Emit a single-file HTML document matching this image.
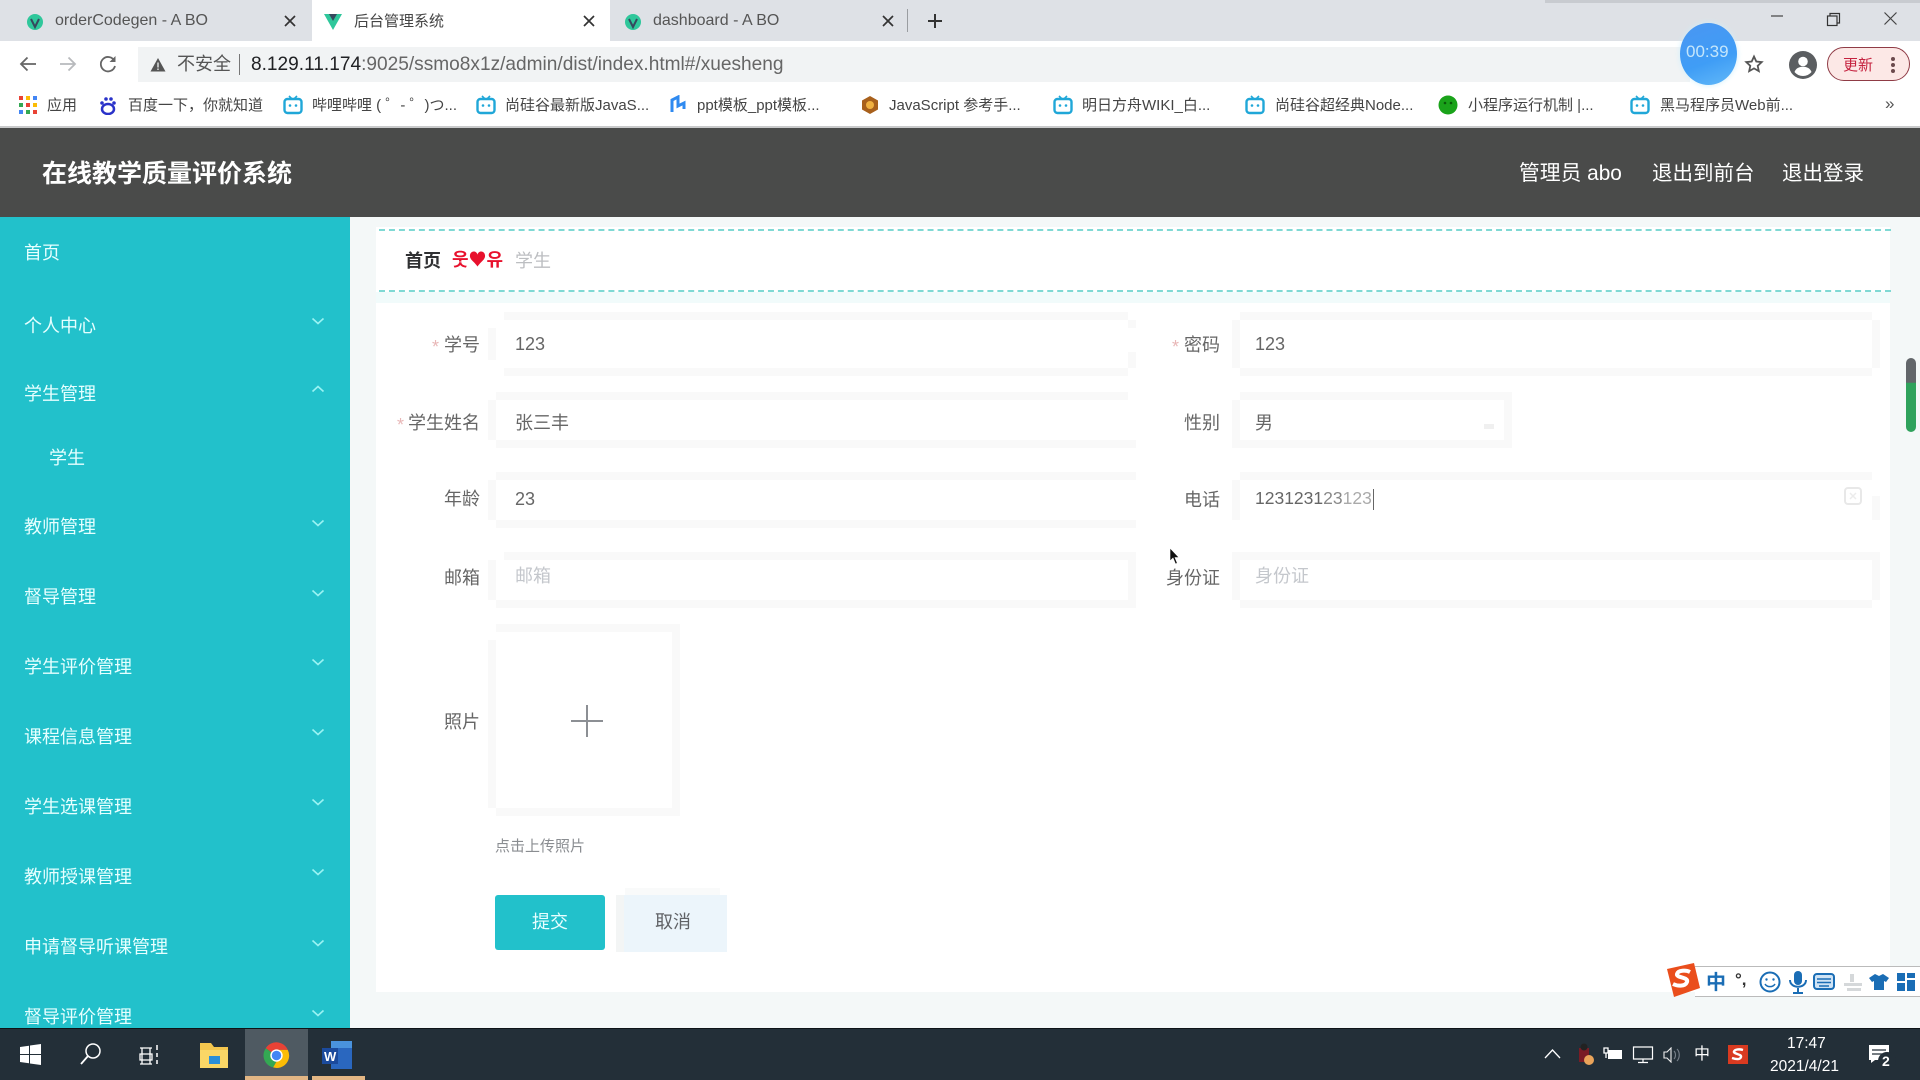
<!DOCTYPE html>
<html lang="zh"><head><meta charset="utf-8"><title>后台管理系统</title>
<style>
html,body{margin:0;padding:0}
body{width:1920px;height:1080px;overflow:hidden;position:relative;background:#f4f8f8;font-family:"Liberation Sans","Noto Sans CJK SC",sans-serif;color:#555}
div,svg,span.t{position:absolute}
.t{position:absolute;white-space:nowrap;line-height:1}
.bm{font-size:15px;color:#444;top:98px}
.m{font-size:18px;color:#e6ffff;left:24px}
.lb{font-size:18px;color:#666;text-align:right;width:120px}
.v{font-size:18px;color:#666}
.ph{font-size:18px;color:#c4c7cc}
.st{font-size:18px;color:#e8b7b7}
.o{background:#f9f9f9}
</style></head><body>
<svg width="0" height="0" style="left:0;top:0"><defs>
<symbol id="bili" viewBox="0 0 20 20"><path d="M6 1l3 3M14 1l-3 3" stroke="#20a7d8" stroke-width="1.6" fill="none"/><rect x="1.5" y="4" width="17" height="14" rx="3" fill="none" stroke="#20a7d8" stroke-width="2.4"/><circle cx="7" cy="10.5" r="1.3" fill="#20a7d8"/><circle cx="13" cy="10.5" r="1.3" fill="#20a7d8"/></symbol>
<symbol id="vue" viewBox="0 0 20 20"><path d="M1 3h18L10 19z" fill="#2fc79b"/><path d="M6 3h8l-4 7z" fill="#35495e"/></symbol>
<symbol id="chev" viewBox="0 0 14 8"><path d="M1.5 1.500L7 6.500l5.500-5" fill="none" stroke="#9af3f3" stroke-width="1.600"/></symbol>
</defs></svg>

<!-- tab strip -->
<div style="left:0;top:0;width:1920px;height:41px;background:#dee1e6"></div>
<div style="left:1545px;top:0;width:375px;height:3px;background:#c8cbd0"></div>
<div style="left:312px;top:0;width:298px;height:41px;background:#fff"></div>
<svg style="left:26px;top:13px" width="18" height="18"><circle cx="9" cy="9" r="8" fill="#2fc79b"/><path d="M5 6l4 8 4-8" fill="none" stroke="#35495e" stroke-width="2"/></svg>
<svg style="left:323px;top:11px" width="20" height="20"><use href="#vue"/></svg>
<svg style="left:624px;top:13px" width="18" height="18"><circle cx="9" cy="9" r="8" fill="#2fc79b"/><path d="M5 6l4 8 4-8" fill="none" stroke="#35495e" stroke-width="2"/></svg>
<span class="t" style="left:55px;top:13px;font-size:16px;color:#555">orderCodegen - A BO</span>
<span class="t" style="left:354px;top:14px;font-size:15px;color:#444">后台管理系统</span>
<span class="t" style="left:653px;top:13px;font-size:16px;color:#555">dashboard - A BO</span>
<svg style="left:284px;top:15px" width="12" height="12"><path d="M1 1l10 10M11 1L1 11" stroke="#333" stroke-width="1.700"/></svg>
<svg style="left:583px;top:15px" width="12" height="12"><path d="M1 1l10 10M11 1L1 11" stroke="#333" stroke-width="1.700"/></svg>
<svg style="left:882px;top:15px" width="12" height="12"><path d="M1 1l10 10M11 1L1 11" stroke="#333" stroke-width="1.700"/></svg>
<div style="left:907px;top:9px;width:1px;height:23px;background:#9a9da1"></div>
<svg style="left:927px;top:13px" width="16" height="16"><path d="M8 1v14M1 8h14" stroke="#333" stroke-width="2"/></svg>
<!-- window controls -->
<svg style="left:1770px;top:12px" width="14" height="8"><path d="M1 4h12" stroke="#444" stroke-width="1.200"/></svg>
<svg style="left:1826px;top:12px" width="15" height="15"><path d="M4 4V1.500h9.500V11H11" fill="none" stroke="#333" stroke-width="1.200"/><rect x="1.500" y="4" width="9.500" height="9.500" fill="none" stroke="#333" stroke-width="1.200"/></svg>
<svg style="left:1883px;top:11px" width="15" height="15"><path d="M1.500 1.500l12 12M13.500 1.500l-12 12" stroke="#444" stroke-width="1.200"/></svg>

<!-- toolbar -->
<div style="left:0;top:41px;width:1920px;height:86px;background:#fff"></div>
<div style="left:138px;top:47px;width:1552px;height:35px;background:#f1f3f4"></div>
<svg style="left:18px;top:55px" width="20" height="18"><path d="M18 9H3M9.500 2.500L3 9l6.500 6.500" fill="none" stroke="#666" stroke-width="1.800"/></svg>
<svg style="left:58px;top:55px" width="20" height="18"><path d="M2 9h15M10.500 2.500L17 9l-6.500 6.500" fill="none" stroke="#b8babd" stroke-width="1.800"/></svg>
<svg style="left:98px;top:54px" width="20" height="20"><path d="M16.500 7A7.200 7.200 0 1 0 17 12" fill="none" stroke="#666" stroke-width="1.800"/><path d="M17.500 2v6h-6z" fill="#666"/></svg>
<svg style="left:150px;top:57px" width="16" height="15"><path d="M8 1l7.500 13.500H.5z" fill="#555"/><path d="M8 5.500v5M8 11.500v1.500" stroke="#f1f3f4" stroke-width="1.300"/></svg>
<span class="t" style="left:177px;top:55px;font-size:18px;color:#555">不安全</span>
<div style="left:239px;top:54px;width:1px;height:21px;background:#777"></div>
<span class="t" style="left:251px;top:55px;font-size:19.100px;color:#202124">8.129.11.174<span style="color:#666">:9025/ssmo8x1z/admin/dist/index.html#/xuesheng</span></span>
<!-- timer -->
<div style="left:1680px;top:23px;width:57px;height:62px;border-radius:50%;background:linear-gradient(160deg,#4a96f2,#3f9df6 60%,#62b9f8);box-shadow:0 0 6px #cfeffb"></div>
<span class="t" style="left:1686px;top:43px;font-size:17px;color:#c4e6fb">00:39</span>
<svg style="left:1743px;top:53px" width="22" height="22"><path d="M11 3.500l2.300 5 5.400.6-4 3.700 1.100 5.300-4.800-2.700-4.800 2.700 1.100-5.300-4-3.700 5.400-.6z" fill="none" stroke="#555" stroke-width="1.800"/></svg>
<svg style="left:1789px;top:51px" width="28" height="28"><circle cx="14" cy="14" r="14" fill="#5b5e61"/><circle cx="14" cy="10.500" r="4.800" fill="#fff"/><path d="M5.500 21c1.500-4 5-5.200 8.500-5.200s7 1.200 8.500 5.200a11 11 0 0 1-17 0z" fill="#fff"/></svg>
<div style="left:1827px;top:47px;width:81px;height:32px;border:1.500px solid #8f3b45;border-radius:18px;background:#fce8e6"></div>
<span class="t" style="left:1843px;top:58px;font-size:15px;color:#c5223f">更新</span>
<div style="left:1891px;top:57px;width:4px;height:4px;border-radius:50%;background:#6b4a4d"></div>
<div style="left:1891px;top:63px;width:4px;height:4px;border-radius:50%;background:#6b4a4d"></div>
<div style="left:1891px;top:69px;width:4px;height:4px;border-radius:50%;background:#6b4a4d"></div>

<!-- bookmarks -->
<svg style="left:19px;top:96px" width="18" height="18"><rect width="4" height="4" fill="#e94235"/><rect x="7" width="4" height="4" fill="#fbbc05"/><rect x="14" width="4" height="4" fill="#4285f4"/><rect y="7" width="4" height="4" fill="#34a853"/><rect x="7" y="7" width="4" height="4" fill="#e94235"/><rect x="14" y="7" width="4" height="4" fill="#fbbc05"/><rect y="14" width="4" height="4" fill="#4285f4"/><rect x="7" y="14" width="4" height="4" fill="#34a853"/><rect x="14" y="14" width="4" height="4" fill="#e94235"/></svg>
<span class="t bm" style="left:47px">应用</span>
<svg style="left:99px;top:96px" width="17" height="19"><circle cx="3" cy="7" r="1.800" fill="#2a32c9"/><circle cx="7" cy="3" r="1.800" fill="#2a32c9"/><circle cx="12" cy="3" r="1.800" fill="#2a32c9"/><circle cx="15" cy="7" r="1.800" fill="#2a32c9"/><ellipse cx="9" cy="13" rx="6" ry="5" fill="none" stroke="#2a32c9" stroke-width="2.500"/></svg>
<span class="t bm" style="left:128px">百度一下，你就知道</span>
<svg style="left:283px;top:95px" width="20" height="20"><use href="#bili"/></svg>
<span class="t bm" style="left:312px">哔哩哔哩 ( ゜- ゜)つ...</span>
<svg style="left:476px;top:95px" width="20" height="20"><use href="#bili"/></svg>
<span class="t bm" style="left:505px">尚硅谷最新版JavaS...</span>
<svg style="left:669px;top:95px" width="19" height="20"><path d="M3 17V5l6-3v9l6-3v6" fill="none" stroke="#2f8af0" stroke-width="3"/></svg>
<span class="t bm" style="left:697px">ppt模板_ppt模板...</span>
<svg style="left:860px;top:95px" width="20" height="20"><path d="M10 1l8 4.500v9L10 19l-8-4.500v-9z" fill="#a8601c"/><circle cx="10" cy="10" r="4" fill="#f0b040"/></svg>
<span class="t bm" style="left:889px">JavaScript 参考手...</span>
<svg style="left:1053px;top:95px" width="20" height="20"><use href="#bili"/></svg>
<span class="t bm" style="left:1082px">明日方舟WIKI_白...</span>
<svg style="left:1245px;top:95px" width="20" height="20"><use href="#bili"/></svg>
<span class="t bm" style="left:1275px">尚硅谷超经典Node...</span>
<svg style="left:1438px;top:95px" width="20" height="20"><circle cx="10" cy="10" r="9.500" fill="#1aa31a"/><circle cx="7" cy="8" r="1.300" fill="#0a5a0a"/><circle cx="13" cy="8" r="1.300" fill="#0a5a0a"/></svg>
<span class="t bm" style="left:1468px">小程序运行机制 |...</span>
<svg style="left:1630px;top:95px" width="20" height="20"><use href="#bili"/></svg>
<span class="t bm" style="left:1660px">黑马程序员Web前...</span>
<span class="t" style="left:1885px;top:95px;font-size:17px;color:#555">»</span>
<div style="left:0;top:126px;width:1920px;height:2px;background:#c9cacb"></div>

<!-- app header -->
<div style="left:0;top:128px;width:1920px;height:89px;background:#4a4b4a"></div>
<span class="t" style="left:42px;top:162px;font-size:25px;font-weight:bold;color:#fff">在线教学质量评价系统</span>
<span class="t" style="left:1519px;top:164px;font-size:20.800px;color:#fff">管理员 abo</span>
<span class="t" style="left:1652px;top:164px;font-size:20.500px;color:#fff">退出到前台</span>
<span class="t" style="left:1782px;top:164px;font-size:20.500px;color:#fff">退出登录</span>

<!-- sidebar -->
<div style="left:0;top:217px;width:350px;height:812px;background:#22c1cb"></div>
<span class="t m" style="top:244px">首页</span>
<span class="t m" style="top:317px">个人中心</span>
<span class="t m" style="top:385px">学生管理</span>
<span class="t m" style="left:49px;top:449px">学生</span>
<span class="t m" style="top:518px">教师管理</span>
<span class="t m" style="top:588px">督导管理</span>
<span class="t m" style="top:658px">学生评价管理</span>
<span class="t m" style="top:728px">课程信息管理</span>
<span class="t m" style="top:798px">学生选课管理</span>
<span class="t m" style="top:868px">教师授课管理</span>
<span class="t m" style="top:938px">申请督导听课管理</span>
<span class="t m" style="top:1008px">督导评价管理</span>
<svg style="left:311px;top:317px" width="14" height="8"><use href="#chev"/></svg>
<svg style="left:311px;top:385px;transform:scaleY(-1)" width="14" height="8"><use href="#chev"/></svg>
<svg style="left:311px;top:519px" width="14" height="8"><use href="#chev"/></svg>
<svg style="left:311px;top:589px" width="14" height="8"><use href="#chev"/></svg>
<svg style="left:311px;top:658px" width="14" height="8"><use href="#chev"/></svg>
<svg style="left:311px;top:728px" width="14" height="8"><use href="#chev"/></svg>
<svg style="left:311px;top:798px" width="14" height="8"><use href="#chev"/></svg>
<svg style="left:311px;top:868px" width="14" height="8"><use href="#chev"/></svg>
<svg style="left:311px;top:939px" width="14" height="8"><use href="#chev"/></svg>
<svg style="left:311px;top:1009px" width="14" height="8"><use href="#chev"/></svg>

<!-- content -->
<div style="left:376px;top:227px;width:1514px;height:765px;background:#fff"></div>
<div style="left:376px;top:292px;width:1514px;height:11px;background:#f1fbfb"></div>
<div style="left:379px;top:229px;width:1512px;border-top:2px dashed #7fd9d4"></div>
<div style="left:379px;top:290px;width:1512px;border-top:2px dashed #7fd9d4"></div>
<span class="t" style="left:405px;top:252px;font-size:18px;font-weight:bold;color:#303133">首页</span>
<span class="t" style="left:452px;top:250px;font-size:18px;font-weight:bold;color:#e8112d;font-family:'Noto Sans CJK KR',sans-serif">웃♥유</span>
<span class="t" style="left:515px;top:252px;font-size:18px;color:#bcbec1">学生</span>

<!-- input bands col 1 -->
<div class="o" style="left:504px;top:312px;width:624px;height:8px"></div>
<div class="o" style="left:488px;top:328px;width:8px;height:32px"></div>
<div class="o" style="left:1128px;top:320px;width:8px;height:8px"></div>
<div class="o" style="left:1128px;top:352px;width:8px;height:16px"></div>
<div class="o" style="left:504px;top:368px;width:624px;height:8px"></div>
<div class="o" style="left:496px;top:392px;width:632px;height:8px"></div>
<div class="o" style="left:488px;top:400px;width:8px;height:40px"></div>
<div class="o" style="left:496px;top:440px;width:640px;height:8px"></div>
<div class="o" style="left:496px;top:472px;width:640px;height:8px"></div>
<div class="o" style="left:488px;top:480px;width:8px;height:40px"></div>
<div class="o" style="left:496px;top:520px;width:640px;height:8px"></div>
<div class="o" style="left:504px;top:552px;width:624px;height:8px"></div>
<div class="o" style="left:488px;top:560px;width:8px;height:40px"></div>
<div class="o" style="left:1128px;top:552px;width:8px;height:48px"></div>
<div class="o" style="left:496px;top:600px;width:640px;height:8px"></div>
<!-- input bands col 2 -->
<div class="o" style="left:1240px;top:312px;width:632px;height:8px"></div>
<div class="o" style="left:1232px;top:320px;width:8px;height:48px"></div>
<div class="o" style="left:1872px;top:320px;width:8px;height:48px"></div>
<div class="o" style="left:1240px;top:368px;width:632px;height:8px"></div>
<div class="o" style="left:1240px;top:392px;width:272px;height:8px"></div>
<div class="o" style="left:1232px;top:400px;width:8px;height:40px"></div>
<div class="o" style="left:1504px;top:400px;width:8px;height:40px"></div>
<div class="o" style="left:1232px;top:440px;width:280px;height:8px"></div>
<div class="o" style="left:1240px;top:472px;width:632px;height:8px"></div>
<div class="o" style="left:1232px;top:480px;width:8px;height:40px"></div>
<div class="o" style="left:1872px;top:496px;width:8px;height:24px"></div>
<div class="o" style="left:1232px;top:552px;width:648px;height:8px"></div>
<div class="o" style="left:1232px;top:560px;width:8px;height:40px"></div>
<div class="o" style="left:1872px;top:560px;width:8px;height:40px"></div>
<div class="o" style="left:1240px;top:600px;width:632px;height:8px"></div>

<span class="t st" style="left:432px;top:338px">*</span>
<span class="t lb" style="left:360px;top:336px">学号</span>
<span class="t v" style="left:515px;top:335px">123</span>
<span class="t st" style="left:397px;top:416px">*</span>
<span class="t lb" style="left:360px;top:414px">学生姓名</span>
<span class="t v" style="left:515px;top:414px">张三丰</span>
<span class="t lb" style="left:360px;top:490px">年龄</span>
<span class="t v" style="left:515px;top:490px">23</span>
<span class="t lb" style="left:360px;top:569px">邮箱</span>
<span class="t ph" style="left:515px;top:567px">邮箱</span>

<span class="t st" style="left:1172px;top:338px">*</span>
<span class="t lb" style="left:1100px;top:336px">密码</span>
<span class="t v" style="left:1255px;top:335px">123</span>
<span class="t lb" style="left:1100px;top:414px">性别</span>
<span class="t v" style="left:1255px;top:414px">男</span>
<div style="left:1484px;top:424px;width:10px;height:5px;background:#f0f0f0"></div>
<span class="t lb" style="left:1100px;top:491px">电话</span>
<span class="t v" style="left:1255px;top:490px;font-size:17.500px">1231231<span style="color:#888">23</span><span style="color:#aaa">123</span></span>
<div style="left:1373px;top:489px;width:1px;height:21px;background:#666"></div>
<svg style="left:1844px;top:487px" width="18" height="18"><rect x="1" y="1" width="16" height="16" rx="3" fill="none" stroke="#e8e8e8" stroke-width="2"/><path d="M6 6l6 6M12 6l-6 6" stroke="#ececec" stroke-width="1.500"/></svg>
<span class="t lb" style="left:1100px;top:569px">身份证</span>
<span class="t ph" style="left:1255px;top:567px">身份证</span>
<svg style="left:1168px;top:546px" width="14" height="22"><path d="M2 2v13l3-3 2.500 6 1.800-.8L7 11.500h4z" fill="#111" stroke="#fff" stroke-width=".6"/></svg>

<!-- upload -->
<span class="t lb" style="left:360px;top:713px">照片</span>
<div class="o" style="left:496px;top:624px;width:184px;height:8px"></div>
<div class="o" style="left:488px;top:640px;width:8px;height:168px"></div>
<div class="o" style="left:672px;top:632px;width:8px;height:176px"></div>
<div class="o" style="left:496px;top:808px;width:184px;height:8px"></div>
<svg style="left:571px;top:705px" width="32" height="32"><path d="M16 0v32M0 16h32" stroke="#8c8f94" stroke-width="2"/></svg>
<span class="t" style="left:495px;top:839px;font-size:15px;color:#8a8d91">点击上传照片</span>

<!-- buttons -->
<div style="left:495px;top:895px;width:110px;height:55px;background:#22c1cb;border-radius:3px"></div>
<span class="t" style="left:532px;top:913px;font-size:18px;color:#e8ffff">提交</span>
<div style="left:625px;top:888px;width:95px;height:7px;background:#f9fafa"></div>
<div style="left:616px;top:895px;width:111px;height:57px;background:#f3f5f5"></div>
<div style="left:624px;top:895px;width:103px;height:57px;background:#ecf5fb"></div>
<span class="t" style="left:655px;top:913px;font-size:18px;color:#606266">取消</span>

<!-- scrollbar -->
<div style="left:1906px;top:358px;width:10px;height:74px;border-radius:5px;background:linear-gradient(#62666a 0,#62666a 33%,#2fa25c 34%,#2fa25c 100%)"></div>

<!-- IME bar -->
<div style="left:1695px;top:966px;width:225px;height:29px;background:#fff;border-top:1px solid #bbb;border-bottom:1px solid #bbb"></div>
<svg style="left:1664px;top:963px" width="36" height="34"><path d="M3 6L30 0l6 25-26 9z" fill="#ea4e1c"/><path d="M26 9c-4-2-12-2-13 2s12 3 10 8-10 4-14 2" fill="none" stroke="#fff" stroke-width="4"/></svg>
<span class="t" style="left:1706px;top:973px;font-size:20px;font-weight:bold;color:#1a6db5">中</span>
<span class="t" style="left:1735px;top:971px;font-size:17px;font-weight:bold;color:#333">°,</span>
<svg style="left:1759px;top:971px" width="22" height="22"><circle cx="11" cy="11" r="9.500" fill="none" stroke="#1a6db5" stroke-width="2"/><circle cx="7.500" cy="8.500" r="1.200" fill="#1a6db5"/><circle cx="14.500" cy="8.500" r="1.200" fill="#1a6db5"/><path d="M6 13c2 3.500 8 3.500 10 0" fill="none" stroke="#1a6db5" stroke-width="1.500"/></svg>
<svg style="left:1788px;top:971px" width="20" height="24"><rect x="6" y="0" width="8" height="14" rx="4" fill="#1a6db5"/><path d="M2 9c0 9 16 9 16 0M10 17v5M5 22h10" fill="none" stroke="#1a6db5" stroke-width="2"/></svg>
<svg style="left:1813px;top:973px" width="22" height="17"><rect x="1" y="1" width="20" height="15" rx="3" fill="#cfe3f5" stroke="#1a6db5" stroke-width="2"/><path d="M4 6h14M4 9.500h14M6 13h10" stroke="#1a6db5" stroke-width="1.500"/></svg>
<svg style="left:1843px;top:973px" width="20" height="20"><path d="M7 1h4v8H7zM1 10h18v3H1zM4 15h14v3H4z" fill="#d5d8da"/></svg>
<svg style="left:1869px;top:973px" width="20" height="18"><path d="M6 1L0 5l3 4 2-1v9h10V8l2 1 3-4-6-4-4 2z" fill="#1a6db5"/></svg>
<svg style="left:1897px;top:973px" width="18" height="18"><rect width="8" height="8" fill="#1a6db5"/><rect x="10" width="8" height="5" fill="#1a6db5"/><rect y="10" width="8" height="8" fill="#1a6db5"/><rect x="10" y="7" width="8" height="11" fill="#1a6db5"/></svg>

<!-- taskbar -->
<div style="left:0;top:1028px;width:1920px;height:52px;background:#232f38;border-top:1px solid #0e1418;box-sizing:border-box"></div>
<div style="left:245px;top:1029px;width:63px;height:51px;background:#4f5a62"></div>
<div style="left:245px;top:1076px;width:63px;height:4px;background:#e2b684"></div>
<div style="left:312px;top:1076px;width:53px;height:4px;background:#e2b684"></div>
<svg style="left:20px;top:1044px" width="21" height="21"><path d="M0 3l9-1.300v8.300H0zM10 1.500L21 0v10H10zM0 11h9v8.300L0 18zM10 11h11v10l-11-1.500z" fill="#fff"/></svg>
<svg style="left:80px;top:1042px" width="22" height="24"><circle cx="13" cy="9" r="7" fill="none" stroke="#fff" stroke-width="1.500"/><path d="M8 14l-7 8" stroke="#fff" stroke-width="1.800"/></svg>
<svg style="left:139px;top:1044px" width="22" height="21"><path d="M1 4h12M1 10h12v6H1zM1 20h12M3 4v16M11 4v16" fill="none" stroke="#fff" stroke-width="1.300"/><path d="M18 1v5M18 9v4M18 16v4" stroke="#fff" stroke-width="1.500"/></svg>
<svg style="left:200px;top:1042px" width="28" height="26"><path d="M0 1h11l3 4h14v21H0z" fill="#f3c64e"/><rect x="0" y="8" width="28" height="18" fill="#fad766"/><rect x="9" y="14" width="11" height="8" fill="#2b8fd8"/></svg>
<svg style="left:263px;top:1042px" width="27" height="27" viewBox="0 0 24 24"><path d="M12 12L2.500 5.500A11 11 0 0 1 22 7H12z" fill="#e94235"/><path d="M2.500 5.500A11 11 0 0 0 9 22.600L14 14z" fill="#34a853"/><path d="M22 7a11 11 0 0 1-13 15.600L14 14l-2-7z" fill="#fbbc05"/><circle cx="12" cy="12" r="5.500" fill="#fff"/><circle cx="12" cy="12" r="4.200" fill="#4285f4"/></svg>
<div style="left:331px;top:1041px;width:21px;height:28px;background:#2a67bf"></div>
<div style="left:331px;top:1041px;width:21px;height:7px;background:#4a93dd"></div>
<div style="left:322px;top:1048px;width:16px;height:16px;background:#1b4a9c"></div>
<span class="t" style="left:324px;top:1050px;font-size:13px;font-weight:bold;color:#fff">W</span>

<!-- tray -->
<svg style="left:1544px;top:1048px" width="17" height="11"><path d="M1 10l7.500-8 7.500 8" fill="none" stroke="#fff" stroke-width="1.300"/></svg>
<svg style="left:1576px;top:1042px" width="18" height="24"><rect x="3" y="6" width="10" height="14" fill="#7a1c25"/><circle cx="8" cy="5" r="3.500" fill="#222"/><circle cx="13" cy="18" r="5" fill="#eaa45a"/></svg>
<svg style="left:1603px;top:1047px" width="20" height="15"><rect x="5" y="3" width="14" height="9" fill="#fff"/><path d="M1 1h4v5H1zM3 6v5" fill="none" stroke="#fff" stroke-width="1.300"/></svg>
<svg style="left:1632px;top:1046px" width="22" height="18"><path d="M1.500 1h19v12h-19zM11 13v3M6 16.500h10" fill="none" stroke="#fff" stroke-width="1.200"/></svg>
<svg style="left:1663px;top:1047px" width="20" height="16"><path d="M1 5h3l4-4v14l-4-4H1z" fill="none" stroke="#eee" stroke-width="1.100"/><path d="M11 4c2 2 2 6 0 8M14 2c3 3 3 9 0 12" fill="none" stroke="#77808a" stroke-width="1.100"/></svg>
<span class="t" style="left:1694px;top:1047px;font-size:16px;color:#fff">中</span>
<svg style="left:1728px;top:1045px" width="20" height="19"><rect width="20" height="19" fill="#d93a20"/><path d="M15 5c-3-1-8-1-9 1.500s8 2.500 7 5.500-6 2-9 1" fill="none" stroke="#fff" stroke-width="2.400"/></svg>
<span class="t" style="left:1787px;top:1036px;font-size:15.500px;color:#fff">17:47</span>
<span class="t" style="left:1770px;top:1059px;font-size:15.500px;color:#fff">2021/4/21</span>
<svg style="left:1868px;top:1044px" width="22" height="20"><path d="M1 1h20v15H7l-4 3v-3H1z" fill="#fff"/><path d="M4 6h14M4 10h14" stroke="#232f38" stroke-width="1.300"/></svg>
<div style="left:1878px;top:1052px;width:18px;height:18px;border-radius:50%;background:#232f38"></div>
<span class="t" style="left:1882px;top:1054px;font-size:14px;font-weight:bold;color:#fff">2</span>
</body></html>
